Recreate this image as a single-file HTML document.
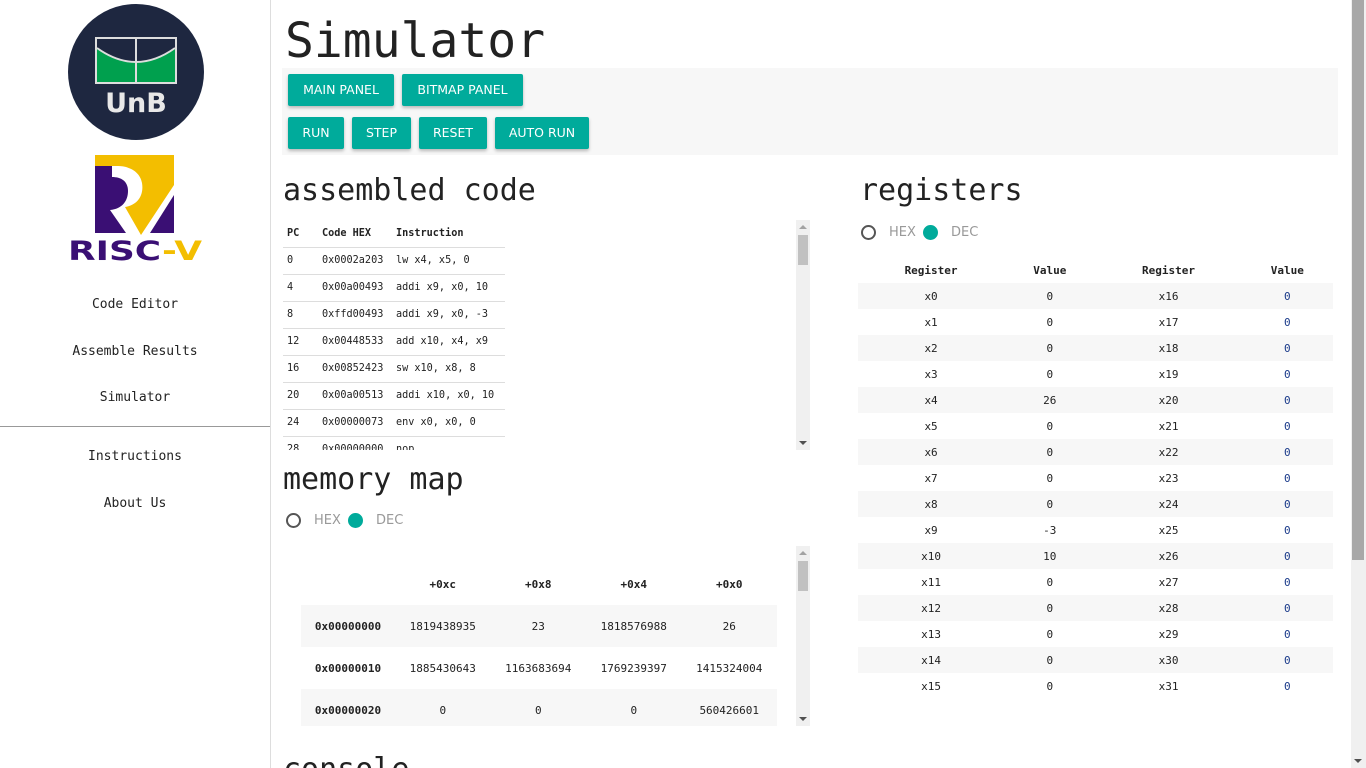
<!DOCTYPE html>
<html><head><meta charset="utf-8"><style>
*{margin:0;padding:0;box-sizing:border-box}
html,body{width:1366px;height:768px;overflow:hidden}
body{position:relative;background:#fff;font-family:"DejaVu Sans Mono","Liberation Mono",monospace;color:#222}
#w{position:absolute;left:0;top:0;width:1366px;height:768px;overflow:hidden}
.a{position:absolute}
.side{left:0;top:0;width:271px;height:768px;border-right:1px solid #ddd}
.nav{position:absolute;left:0;width:270px;text-align:center;font-size:13px;color:#222}
h1,h2{position:absolute;font-weight:normal;color:#222;white-space:nowrap}
.btn{position:absolute;height:32px;background:#00ab9b;color:#fff;font-family:"DejaVu Sans","Liberation Sans",sans-serif;font-size:12.5px;line-height:32px;text-align:center;border-radius:2px;box-shadow:0 2px 3px rgba(0,0,0,.25)}
.sb{position:absolute;width:14px;background:#f0f0f0}
.sb .t{position:absolute;left:2px;width:10px;background:#c1c1c1}
.up,.dn{position:absolute;left:3px;width:0;height:0;border-left:4px solid transparent;border-right:4px solid transparent}
.up{top:5px;border-bottom:4px solid #a3a3a3}
.dn{bottom:5px;border-top:4px solid #505050}
table{border-collapse:collapse;font-size:11px}
.ac{table-layout:fixed;font-size:10.2px}
.ac td,.ac th{height:27px;text-align:left;padding:0 4px;border-bottom:1px solid #ddd;white-space:nowrap;overflow:hidden}
.ac th{font-weight:bold}
.rg td,.rg th{height:26px;text-align:center;font-size:11px}
.rg tr:nth-child(even) td{background:#f7f7f7}
.rg td:nth-child(4){color:#1a3a8a}
.mm td,.mm th{height:42px;text-align:center;font-size:11px}
.mm tr:nth-child(even) td{background:#f7f7f7}
.rad{position:absolute;font-family:"DejaVu Sans","Liberation Sans",sans-serif;font-size:13px;color:#999}
.ro{position:absolute;width:15px;height:15px;border:2px solid #555;border-radius:50%}
.rf{position:absolute;width:15px;height:15px;background:#00ab9b;border-radius:50%}
</style></head><body><div id="w">
<div class="a side"></div>
<svg class="a" style="left:68px;top:4px" width="136" height="136" viewBox="0 0 136 136">
<circle cx="68" cy="68" r="68" fill="#1e2740"/>
<rect x="28" y="34" width="80" height="45" fill="#00a04e" stroke="#ddd" stroke-width="2"/>
<path d="M29 44 Q68 72 107 44 L107 35 L29 35Z" fill="#1e2740"/>
<path d="M29 44 Q68 72 107 44" fill="none" stroke="#ddd" stroke-width="2"/>
<line x1="68" y1="34" x2="68" y2="79" stroke="#ddd" stroke-width="2"/>
<text x="68" y="108" text-anchor="middle" font-family="DejaVu Sans,sans-serif" font-weight="bold" font-size="27" fill="#e8e8e8">UnB</text>
</svg>
<svg class="a" style="left:66px;top:155px" width="140" height="110" viewBox="0 0 140 110">
<path d="M29 0 H108 V30 L75 80 L59 52 C72 50 78 40 76 28 C74 16 62 11 52 11 H29Z" fill="#f3be00"/>
<path d="M29 11 H46 V22 C55 22 62 26 62 36 C62 46 56 54 44 55 L60 78 H29Z" fill="#3a0f74"/>
<path d="M108 40 V78 H84Z" fill="#3a0f74"/>
<text x="2" y="105" textLength="134" lengthAdjust="spacingAndGlyphs" font-family="DejaVu Sans,sans-serif" font-weight="bold" font-size="27" fill="#3a0f74">RISC<tspan fill="#f3be00">-V</tspan></text>
</svg>
<div class="nav" style="top:297px">Code Editor</div>
<div class="nav" style="top:344px">Assemble Results</div>
<div class="nav" style="top:390px">Simulator</div>
<div class="a" style="left:0;top:426px;width:270px;height:1px;background:#999"></div>
<div class="nav" style="top:449px">Instructions</div>
<div class="nav" style="top:496px">About Us</div>

<h1 style="left:285px;top:11px;font-size:48px;line-height:60px">Simulator</h1>
<div class="a" style="left:282px;top:68px;width:1056px;height:87px;background:#f7f7f7"></div>
<div class="btn" style="left:288px;top:74px;width:106px">MAIN PANEL</div>
<div class="btn" style="left:402px;top:74px;width:121px">BITMAP PANEL</div>
<div class="btn" style="left:288px;top:117px;width:56px">RUN</div>
<div class="btn" style="left:352px;top:117px;width:59px">STEP</div>
<div class="btn" style="left:419px;top:117px;width:68px">RESET</div>
<div class="btn" style="left:495px;top:117px;width:94px">AUTO RUN</div>

<h2 style="left:283px;top:171px;font-size:30px;line-height:40px">assembled code</h2>
<div class="a" style="left:283px;top:220px;width:513px;height:230px;overflow:hidden">
<table class="ac" style="width:222px"><colgroup><col style="width:35px"><col style="width:74px"><col></colgroup><tr><th>PC</th><th>Code HEX</th><th>Instruction</th></tr>
<tr><td>0</td><td>0x0002a203</td><td>lw x4, x5, 0</td></tr>
<tr><td>4</td><td>0x00a00493</td><td>addi x9, x0, 10</td></tr>
<tr><td>8</td><td>0xffd00493</td><td>addi x9, x0, -3</td></tr>
<tr><td>12</td><td>0x00448533</td><td>add x10, x4, x9</td></tr>
<tr><td>16</td><td>0x00852423</td><td>sw x10, x8, 8</td></tr>
<tr><td>20</td><td>0x00a00513</td><td>addi x10, x0, 10</td></tr>
<tr><td>24</td><td>0x00000073</td><td>env x0, x0, 0</td></tr>
<tr><td>28</td><td>0x00000000</td><td>nop</td></tr></table></div>
<div class="sb" style="left:796px;top:220px;height:230px"><div class="up"></div><div class="t" style="top:15px;height:30px"></div><div class="dn"></div></div>

<h2 style="left:283px;top:460px;font-size:30px;line-height:40px">memory map</h2>
<div class="ro" style="left:286px;top:513px"></div><div class="rad" style="left:314px;top:513px">HEX</div>
<div class="rf" style="left:348px;top:513px"></div><div class="rad" style="left:376px;top:513px">DEC</div>
<div class="a" style="left:301px;top:546px;width:476px;height:180px;overflow:hidden">
<table class="mm" style="width:476px;margin-top:17px"><tr><th style="width:94px"></th><th>+0xc</th><th>+0x8</th><th>+0x4</th><th>+0x0</th></tr>
<tr><td><b>0x00000000</b></td><td>1819438935</td><td>23</td><td>1818576988</td><td>26</td></tr>
<tr><td><b>0x00000010</b></td><td>1885430643</td><td>1163683694</td><td>1769239397</td><td>1415324004</td></tr>
<tr><td><b>0x00000020</b></td><td>0</td><td>0</td><td>0</td><td>560426601</td></tr></table></div>
<div class="sb" style="left:796px;top:546px;height:180px"><div class="up"></div><div class="t" style="top:15px;height:30px"></div><div class="dn"></div></div>
<h2 style="left:283px;top:750px;font-size:30px;line-height:40px">console</h2>

<h2 style="left:860px;top:171px;font-size:30px;line-height:40px">registers</h2>
<div class="ro" style="left:861px;top:225px"></div><div class="rad" style="left:889px;top:225px">HEX</div>
<div class="rf" style="left:923px;top:225px"></div><div class="rad" style="left:951px;top:225px">DEC</div>
<div class="a" style="left:858px;top:257px;width:475px">
<table class="rg" style="width:475px"><tr><th>Register</th><th>Value</th><th>Register</th><th>Value</th></tr>
<tr><td>x0</td><td>0</td><td>x16</td><td>0</td></tr>
<tr><td>x1</td><td>0</td><td>x17</td><td>0</td></tr>
<tr><td>x2</td><td>0</td><td>x18</td><td>0</td></tr>
<tr><td>x3</td><td>0</td><td>x19</td><td>0</td></tr>
<tr><td>x4</td><td>26</td><td>x20</td><td>0</td></tr>
<tr><td>x5</td><td>0</td><td>x21</td><td>0</td></tr>
<tr><td>x6</td><td>0</td><td>x22</td><td>0</td></tr>
<tr><td>x7</td><td>0</td><td>x23</td><td>0</td></tr>
<tr><td>x8</td><td>0</td><td>x24</td><td>0</td></tr>
<tr><td>x9</td><td>-3</td><td>x25</td><td>0</td></tr>
<tr><td>x10</td><td>10</td><td>x26</td><td>0</td></tr>
<tr><td>x11</td><td>0</td><td>x27</td><td>0</td></tr>
<tr><td>x12</td><td>0</td><td>x28</td><td>0</td></tr>
<tr><td>x13</td><td>0</td><td>x29</td><td>0</td></tr>
<tr><td>x14</td><td>0</td><td>x30</td><td>0</td></tr>
<tr><td>x15</td><td>0</td><td>x31</td><td>0</td></tr></table></div>

<div class="sb" style="left:1351px;top:0;width:15px;height:768px"><div class="t" style="left:1px;top:0;width:12px;height:560px;background:#a8a8a8"></div><div class="dn" style="left:3px"></div></div>
</div></body></html>
